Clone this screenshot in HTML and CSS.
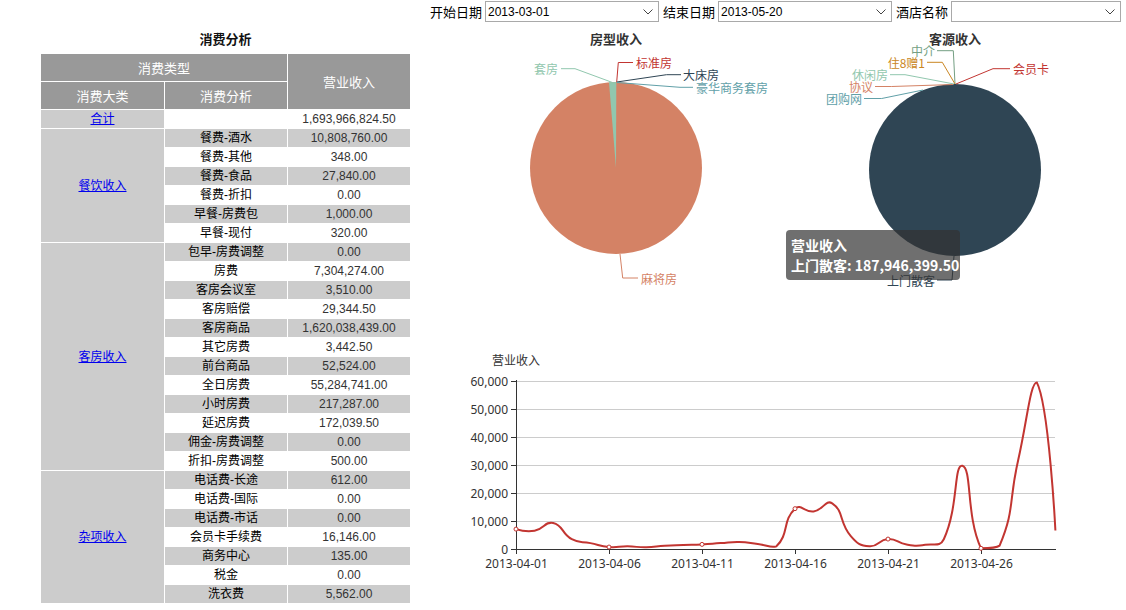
FILE: index.html
```html
<!DOCTYPE html>
<html lang="zh-CN">
<head>
  <meta charset="UTF-8">
  <title>消费分析</title>
  <link rel="stylesheet" href="styles.css">
</head>
<body>
  <div class="toolbar">
    <label>开始日期</label>
    <span class="pick">
      <select><option>2013-03-01</option></select>
      <svg class="chev" width="10" height="6" viewBox="0 0 10 6"><polyline points="0.5,0.5 5,5 9.5,0.5"/></svg>
    </span>
    <label>结束日期</label>
    <span class="pick">
      <select><option>2013-05-20</option></select>
      <svg class="chev" width="10" height="6" viewBox="0 0 10 6"><polyline points="0.5,0.5 5,5 9.5,0.5"/></svg>
    </span>
    <label>酒店名称</label>
    <span class="pick hotel">
      <select><option></option></select>
      <svg class="chev" width="10" height="6" viewBox="0 0 10 6"><polyline points="0.5,0.5 5,5 9.5,0.5"/></svg>
    </span>
  </div>

  <div class="main">
    <div class="report">
      <table class="grid">
        <caption>消费分析</caption>
        <colgroup><col class="c1"><col class="c2"><col class="c3"></colgroup>
        <thead>
          <tr><th colspan="2">消费类型</th><th rowspan="2">营业收入</th></tr>
          <tr><th>消费大类</th><th>消费分析</th></tr>
        </thead>
        <tbody>
          <tr><td class="group"><a href="#">合计</a></td><td></td><td class="num">1,693,966,824.50</td></tr>
          <tr class="odd"><td class="group" rowspan="6"><a href="#">餐饮收入</a></td><td>餐费-酒水</td><td class="num">10,808,760.00</td></tr>
          <tr><td>餐费-其他</td><td class="num">348.00</td></tr>
          <tr class="odd"><td>餐费-食品</td><td class="num">27,840.00</td></tr>
          <tr><td>餐费-折扣</td><td class="num">0.00</td></tr>
          <tr class="odd"><td>早餐-房费包</td><td class="num">1,000.00</td></tr>
          <tr><td>早餐-现付</td><td class="num">320.00</td></tr>
          <tr class="odd"><td class="group" rowspan="12"><a href="#">客房收入</a></td><td>包早-房费调整</td><td class="num">0.00</td></tr>
          <tr><td>房费</td><td class="num">7,304,274.00</td></tr>
          <tr class="odd"><td>客房会议室</td><td class="num">3,510.00</td></tr>
          <tr><td>客房赔偿</td><td class="num">29,344.50</td></tr>
          <tr class="odd"><td>客房商品</td><td class="num">1,620,038,439.00</td></tr>
          <tr><td>其它房费</td><td class="num">3,442.50</td></tr>
          <tr class="odd"><td>前台商品</td><td class="num">52,524.00</td></tr>
          <tr><td>全日房费</td><td class="num">55,284,741.00</td></tr>
          <tr class="odd"><td>小时房费</td><td class="num">217,287.00</td></tr>
          <tr><td>延迟房费</td><td class="num">172,039.50</td></tr>
          <tr class="odd"><td>佣金-房费调整</td><td class="num">0.00</td></tr>
          <tr><td>折扣-房费调整</td><td class="num">500.00</td></tr>
          <tr class="odd"><td class="group" rowspan="7"><a href="#">杂项收入</a></td><td>电话费-长途</td><td class="num">612.00</td></tr>
          <tr><td>电话费-国际</td><td class="num">0.00</td></tr>
          <tr class="odd"><td>电话费-市话</td><td class="num">0.00</td></tr>
          <tr><td>会员卡手续费</td><td class="num">16,146.00</td></tr>
          <tr class="odd"><td>商务中心</td><td class="num">135.00</td></tr>
          <tr><td>税金</td><td class="num">0.00</td></tr>
          <tr class="odd"><td>洗衣费</td><td class="num">5,562.00</td></tr>
        </tbody>
      </table>
    </div>

    <div class="charts">
      <div class="pies">
        <svg class="pie" width="340" height="300" viewBox="446 27 340 300">
          <text class="pie-title" x="616" y="38">房型收入</text>
          <circle cx="616" cy="168" r="86" fill="#d48265"/>
          <path d="M616 168 L609 82.3 A86 86 0 0 1 616.3 82 Z" fill="#91c7ae"/>
          <g class="lead">
            <polyline points="616.7,82 618.3,62.5 633,62.5" stroke="#c23531"/>
            <polyline points="616.8,82 666.5,74.7 681,74.7" stroke="#2f4554"/>
            <polyline points="617,82.5 680,87.3 693,87.3" stroke="#61a0a8"/>
            <polyline points="612.5,82.5 575,68.7 561,68.7" stroke="#91c7ae"/>
            <polyline points="620,254 622.7,278 638,278" stroke="#d48265"/>
          </g>
          <text class="pie-label" x="636" y="62.5" fill="#c23531">标准房</text>
          <text class="pie-label" x="683" y="74.7" fill="#2f4554">大床房</text>
          <text class="pie-label" x="696" y="87.3" fill="#61a0a8">豪华商务套房</text>
          <text class="pie-label end" x="558" y="68.7" fill="#91c7ae">套房</text>
          <text class="pie-label" x="641" y="278" fill="#d48265">麻将房</text>
        </svg>

        <svg class="pie" width="340" height="300" viewBox="786 27 340 300">
          <text class="pie-title" x="955" y="38">客源收入</text>
          <circle cx="955" cy="170" r="86" fill="#2f4554"/>
          <g class="lead">
            <polyline points="955,84 953.3,50.7 937,50.7" stroke="#749f83"/>
            <polyline points="955,84 942.3,62.3 927,62.3" stroke="#ca8622"/>
            <polyline points="954,84 905,74.7 890,74.7" stroke="#91c7ae"/>
            <polyline points="953,84.5 891.7,86.5 875,86.5" stroke="#d48265"/>
            <polyline points="923,90 881.7,98.5 864,98.5" stroke="#61a0a8"/>
            <polyline points="956,84 993,68.7 1010,68.7" stroke="#c23531"/>
            <polyline points="954,256 952,280 937,280" stroke="#2f4554"/>
          </g>
          <text class="pie-label end" x="935" y="50.7" fill="#749f83">中介</text>
          <text class="pie-label end" x="925" y="62.3" fill="#ca8622">住8赠1</text>
          <text class="pie-label end" x="888" y="74.7" fill="#91c7ae">休闲房</text>
          <text class="pie-label end" x="873" y="86.5" fill="#d48265">协议</text>
          <text class="pie-label end" x="862" y="98.5" fill="#61a0a8">团购网</text>
          <text class="pie-label" x="1013" y="68.7" fill="#c23531">会员卡</text>
          <text class="pie-label end" x="935" y="280" fill="#2f4554">上门散客</text>
        </svg>

        <div class="tooltip">
          <div>营业收入</div>
          <div>上门散客: 187,946,399.50</div>
        </div>
      </div>

      <svg class="trend" id="trend" width="680" height="283" viewBox="446 327 680 283"></svg>
    </div>
  </div>

  <script>
  const values = [7100, 6500, 9300, 3500, 2100, 700, 950, 600, 1200, 1450, 1650, 2100, 2500, 1800, 950,
                  14400, 13400, 16300, 4600, 950, 3550, 1600, 1500, 3500, 29700, 250, 1200, 31800, 59500, 6600];
  const x0 = 516, dayW = 18.6, y0 = 549, perUnit = 28 / 10000;
  const ns = 'http://www.w3.org/2000/svg';
  const svg = document.getElementById('trend');

  function add(tag, attrs, text) {
    const el = document.createElementNS(ns, tag);
    for (const k in attrs) el.setAttribute(k, attrs[k]);
    if (text !== undefined) el.textContent = text;
    svg.appendChild(el);
    return el;
  }

  // grid + y axis
  add('text', { x: 516, y: 360, class: 'axis-name' }, '营业收入');
  for (let v = 0; v <= 60000; v += 10000) {
    const y = Math.round(y0 - v * perUnit) + 0.5;
    if (v > 0) add('line', { x1: x0, y1: y, x2: 1055, y2: y, class: 'gridline' });
    add('line', { x1: x0 - 5, y1: y, x2: x0, y2: y, class: 'axis' });
    add('text', { x: 508, y: y, class: 'ylabel' }, v.toLocaleString('en-US'));
  }
  add('line', { x1: x0 + 0.5, y1: 380, x2: x0 + 0.5, y2: y0 + 0.5, class: 'axis' });
  add('line', { x1: x0, y1: y0 + 0.5, x2: 1056, y2: y0 + 0.5, class: 'axis' });

  // x ticks every 5 days
  for (let d = 0; d < 30; d += 5) {
    const x = Math.round(x0 + d * dayW) + 0.5;
    add('line', { x1: x, y1: y0, x2: x, y2: y0 + 5, class: 'axis' });
    const day = String(d + 1).padStart(2, '0');
    add('text', { x: x, y: 563, class: 'xlabel' }, '2013-04-' + day);
  }

  // smoothed line
  const pts = values.map((v, i) => [x0 + i * dayW, y0 - v * perUnit]);
  const cps = [];
  let minY = Infinity, maxY = -Infinity;
  pts.forEach(p => { minY = Math.min(minY, p[1]); maxY = Math.max(maxY, p[1]); });
  for (let i = 0; i < pts.length; i++) {
    const p = pts[i];
    if (i === 0 || i === pts.length - 1) { cps.push(p.slice()); continue; }
    const prev = pts[i - 1], next = pts[i + 1];
    const vx = (next[0] - prev[0]) * 0.5, vy = (next[1] - prev[1]) * 0.5;
    let d0 = Math.hypot(p[0] - prev[0], p[1] - prev[1]);
    let d1 = Math.hypot(p[0] - next[0], p[1] - next[1]);
    const sum = d0 + d1;
    d0 /= sum; d1 /= sum;
    const c0 = [p[0] - vx * d0, Math.min(maxY, Math.max(minY, p[1] - vy * d0))];
    const c1 = [p[0] + vx * d1, Math.min(maxY, Math.max(minY, p[1] + vy * d1))];
    cps.push(c0, c1);
  }
  let d = 'M' + pts[0][0] + ' ' + pts[0][1];
  for (let i = 0; i < pts.length - 1; i++) {
    const a = cps[2 * i], b = cps[2 * i + 1], p = pts[i + 1];
    d += ' C' + a.join(' ') + ' ' + b.join(' ') + ' ' + p.join(' ');
  }
  add('path', { d: d, class: 'series' });

  for (let i = 0; i < 30; i += 5) {
    add('circle', { cx: pts[i][0], cy: pts[i][1], r: 2, class: 'dot' });
  }
  </script>
</body>
</html>
```

FILE: styles.css
```css
body {
  margin: 0;
  font-family: "Liberation Sans", "Noto Sans CJK SC", sans-serif;
  font-size: 12px;
  color: #000;
  background: #fff;
}

.toolbar {
  display: flex;
  align-items: center;
  height: 27px;
  padding-left: 430px;
  padding-bottom: 4px;
  box-sizing: border-box;
  font-size: 13px;
}
.toolbar label {
  margin-right: 3px;
}
.pick {
  position: relative;
  display: block;
  width: 174px;
  height: 21px;
  margin-right: 4px;
}
.pick.hotel {
  width: 170px;
}
.pick select {
  appearance: none;
  -webkit-appearance: none;
  width: 100%;
  height: 100%;
  margin: 0;
  padding: 0 2px;
  border: 1px solid #a9a9a9;
  border-radius: 0;
  background: #fff;
  font-family: "Liberation Sans", sans-serif;
  font-size: 12px;
  color: #000;
}
.chev {
  position: absolute;
  right: 6px;
  top: 8px;
  pointer-events: none;
}
.chev polyline {
  fill: none;
  stroke: #444;
  stroke-width: 1;
}

.main {
  display: flex;
  align-items: flex-start;
}

.report {
  margin-left: 40px;
}
.grid {
  width: 371px;
  border-collapse: separate;
  border-spacing: 1px;
  table-layout: fixed;
}
.grid col.c1 {
  width: 123px;
}
.grid col.c2,
.grid col.c3 {
  width: 122px;
}
.grid caption {
  height: 26px;
  line-height: 26px;
  font-size: 13px;
  font-weight: bold;
  color: #111;
}
.grid th {
  height: 27px;
  padding: 0;
  background: #999;
  color: #fff;
  font-size: 13px;
  font-weight: normal;
}
.grid td {
  height: 18px;
  padding: 0;
  line-height: 18px;
  text-align: center;
  background: #fff;
  white-space: nowrap;
}
.grid tr.odd td {
  background: #ccc;
}
.grid td.group {
  background: #ccc;
}
.grid td.group a {
  color: #0000ee;
}
.grid td.num {
  color: #333;
}

.charts {
  margin-left: 35px;
  width: 680px;
}
.pies {
  position: relative;
  display: flex;
}
.pie, .trend {
  display: block;
}
.pie-title {
  font-family: "Noto Sans CJK SC", sans-serif;
  font-size: 13px;
  font-weight: bold;
  fill: #333;
  text-anchor: middle;
  dominant-baseline: central;
}
.pie-label {
  font-family: "Noto Sans CJK SC", sans-serif;
  font-size: 12px;
  dominant-baseline: central;
}
.pie-label.end {
  text-anchor: end;
}
.lead polyline {
  fill: none;
  stroke-width: 1;
}

.tooltip {
  position: absolute;
  left: 340px;
  top: 203px;
  width: 164px;
  padding: 5px;
  border-radius: 4px;
  background: rgba(50, 50, 50, 0.7);
  color: #fff;
  font-family: "Noto Sans CJK SC", sans-serif;
  font-size: 14px;
  font-weight: bold;
  line-height: 20px;
  white-space: nowrap;
}

.trend text {
  font-family: "Noto Sans", "Noto Sans CJK SC", sans-serif;
  font-size: 12px;
  fill: #333;
  dominant-baseline: central;
}
.trend .axis-name,
.trend .xlabel {
  text-anchor: middle;
}
.trend .ylabel {
  text-anchor: end;
}
.gridline {
  stroke: #ccc;
  stroke-width: 1;
}
.axis {
  stroke: #333;
  stroke-width: 1;
}
.series {
  fill: none;
  stroke: #c23531;
  stroke-width: 2;
}
.dot {
  fill: #fff;
  stroke: #c23531;
  stroke-width: 1;
}
```
